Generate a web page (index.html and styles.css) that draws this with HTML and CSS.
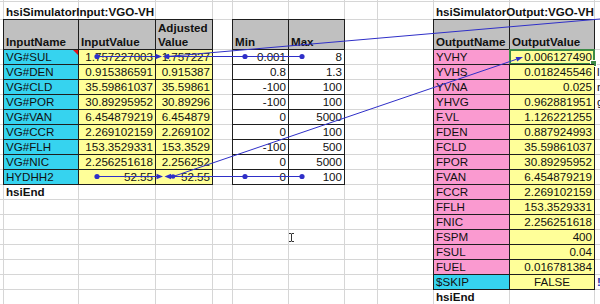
FILE: index.html
```html
<!DOCTYPE html>
<html>
<head>
<meta charset="utf-8">
<link rel="stylesheet" href="styles.css">
</head>
<body>
<div class="sheet">
  <div class="title t-in">hsiSimulatorInput:VGO-VH</div>
  <div class="title t-out">hsiSimulatorOutput:VGO-VH</div>

  <div class="tbl tbl-in">
    <div class="c hd">InputName</div><div class="c hd">InputValue</div><div class="c hd"><span>Adjusted<br>Value</span></div>
    <div class="c nm cm">VG#SUL</div><div class="c yl">1.757227003</div><div class="c yl">1.757227</div>
    <div class="c nm">VG#DEN</div><div class="c yl">0.915386591</div><div class="c yl">0.915387</div>
    <div class="c nm">VG#CLD</div><div class="c yl">35.59861037</div><div class="c yl">35.59861</div>
    <div class="c nm">VG#POR</div><div class="c yl">30.89295952</div><div class="c yl">30.89296</div>
    <div class="c nm">VG#VAN</div><div class="c yl">6.454879219</div><div class="c yl">6.454879</div>
    <div class="c nm">VG#CCR</div><div class="c yl">2.269102159</div><div class="c yl">2.269102</div>
    <div class="c nm">VG#FLH</div><div class="c yl">153.3529331</div><div class="c yl">153.3529</div>
    <div class="c nm">VG#NIC</div><div class="c yl">2.256251618</div><div class="c yl">2.256252</div>
    <div class="c nm">HYDHH2</div><div class="c yl">52.55</div><div class="c yl">52.55</div>
  </div>
  <div class="end e-in">hsiEnd</div>

  <div class="tbl tbl-mm">
    <div class="c hd">Min</div><div class="c hd">Max</div>
    <div class="c num">0.001</div><div class="c num">8</div>
    <div class="c num">0.8</div><div class="c num">1.3</div>
    <div class="c num">-100</div><div class="c num">100</div>
    <div class="c num">-100</div><div class="c num">100</div>
    <div class="c num">0</div><div class="c num">5000</div>
    <div class="c num">0</div><div class="c num">100</div>
    <div class="c num">-100</div><div class="c num">500</div>
    <div class="c num">0</div><div class="c num">5000</div>
    <div class="c num">0</div><div class="c num">100</div>
  </div>

  <div class="tbl tbl-out">
    <div class="c hd">OutputName</div><div class="c hd">OutputValue</div>
    <div class="c pk">YVHY</div><div class="c yl sel">0.006127490</div>
    <div class="c pk">YVHS</div><div class="c yl">0.018245546</div>
    <div class="c pk">YVNA</div><div class="c yl">0.025</div>
    <div class="c pk">YHVG</div><div class="c yl">0.962881951</div>
    <div class="c pk">F.VL</div><div class="c yl">1.126221255</div>
    <div class="c pk">FDEN</div><div class="c yl">0.887924993</div>
    <div class="c pk">FCLD</div><div class="c yl">35.59861037</div>
    <div class="c pk">FPOR</div><div class="c yl">30.89295952</div>
    <div class="c pk">FVAN</div><div class="c yl">6.454879219</div>
    <div class="c pk">FCCR</div><div class="c yl">2.269102159</div>
    <div class="c pk">FFLH</div><div class="c yl">153.3529331</div>
    <div class="c pk">FNIC</div><div class="c yl">2.256251618</div>
    <div class="c pk">FSPM</div><div class="c yl">400</div>
    <div class="c pk">FSUL</div><div class="c yl">0.04</div>
    <div class="c pk">FUEL</div><div class="c yl">0.016781384</div>
    <div class="c nm">$SKIP</div><div class="c yl ctr">FALSE</div>
  </div>
  <div class="end e-out">hsiEnd</div>

  <div class="k k5">l</div>
  <div class="k k6">r</div>
  <div class="k k7">g</div>
  <div class="k k19">!</div>

  <svg class="arrows" width="600" height="304" viewBox="0 0 600 304">
    <g stroke="#2f2fc8" stroke-width="1" fill="#2f2fc8">
      <line x1="97" y1="56.5" x2="157" y2="56.5"/>
      <line x1="302" y1="56.5" x2="168" y2="56.5"/>
      <line x1="167" y1="56.5" x2="600" y2="19"/>
      <line x1="97" y1="176.5" x2="158" y2="176.5"/>
      <line x1="302" y1="176.5" x2="170" y2="176.5"/>
      <line x1="173" y1="176.5" x2="516.4" y2="59.3"/>
    </g>
    <g fill="#2f2fc8" stroke="none">
      <circle cx="97" cy="56.5" r="2.6"/>
      <circle cx="245" cy="56.5" r="2.6"/>
      <circle cx="302" cy="56.5" r="2.6"/>
      <path d="M162 56.5 L155.5 53.8 L155.5 59.2 Z"/>
      <path d="M162.5 56.5 L169 53.8 L169 59.2 Z"/>
      <circle cx="167.5" cy="56.5" r="2.3"/>
      <circle cx="97" cy="176.5" r="2.6"/>
      <circle cx="245" cy="176.5" r="2.6"/>
      <circle cx="302" cy="176.5" r="2.6"/>
      <path d="M163 176.5 L156.5 173.8 L156.5 179.2 Z"/>
      <path d="M164.5 176.5 L171 173.8 L171 179.2 Z"/>
      <circle cx="173" cy="176.5" r="2.3"/>
      <path d="M523 57 L517.2 61.6 L515.6 56.9 Z"/>
    </g>
  </svg>

  <svg class="cursor" width="7" height="11" viewBox="0 0 7 11">
    <path d="M1 1.5h2M4 1.5h2M3.5 1.5v8M1 9.5h2M4 9.5h2" stroke="#333" stroke-width="1" fill="none"/>
  </svg>
</div>
</body>
</html>
```

FILE: styles.css
```css
* {
  box-sizing: border-box;
  margin: 0;
  padding: 0;
}

body {
  margin: 0;
  background: #fff;
  font-family: "Liberation Sans", Arial, sans-serif;
  font-size: 11.6px;
  line-height: 14px;
  color: #111;
}

.sheet {
  position: relative;
  width: 600px;
  height: 304px;
  overflow: hidden;
  display: grid;
  grid-template-columns: 3px 75px 77px 57px 20px 56px 56px 33px 56px 76px 85px 60px;
  grid-template-rows: 1px 18px 30px repeat(17, 15px);
  background-color: #fff;
  background-image:
    linear-gradient(#d6d6d6, #d6d6d6),
    linear-gradient(#d6d6d6, #d6d6d6),
    linear-gradient(#d6d6d6, #d6d6d6),
    linear-gradient(#d6d6d6, #d6d6d6),
    linear-gradient(#d6d6d6, #d6d6d6),
    linear-gradient(#d6d6d6, #d6d6d6),
    linear-gradient(#d6d6d6, #d6d6d6),
    linear-gradient(#d6d6d6, #d6d6d6),
    linear-gradient(#d6d6d6, #d6d6d6),
    linear-gradient(#d6d6d6, #d6d6d6),
    linear-gradient(#d6d6d6, #d6d6d6),
    linear-gradient(#d6d6d6, #d6d6d6),
    linear-gradient(#d6d6d6, #d6d6d6),
    repeating-linear-gradient(to bottom, #d6d6d6 0, #d6d6d6 1px, transparent 1px, transparent 15px);
  background-size:
    1px 100%, 1px 100%, 1px 100%, 1px 100%, 1px 100%, 1px 100%,
    1px 100%, 1px 100%, 1px 100%, 1px 100%, 1px 100%,
    100% 1px, 100% 1px, 100% 255px;
  background-position:
    3px 0, 78px 0, 155px 0, 212px 0, 232px 0, 288px 0,
    344px 0, 377px 0, 433px 0, 509px 0, 594px 0,
    0 1px, 0 19px, 0 49px;
  background-repeat: no-repeat;
}

.title,
.end {
  font-weight: bold;
  white-space: nowrap;
  padding-left: 3px;
  align-self: end;
}

.t-in { grid-column: 2; grid-row: 2; }
.t-out { grid-column: 10; grid-row: 2; }
.e-in { grid-column: 2; grid-row: 13; }
.e-out { grid-column: 10; grid-row: 20; }

.tbl {
  display: grid;
  border-right: 1px solid #1e1e1e;
  border-bottom: 1px solid #1e1e1e;
  margin: 0 -1px -1px 0;
}

.tbl-in {
  grid-column: 2 / 5;
  grid-row: 3 / 13;
  grid-template-columns: 75px 77px 57px;
  grid-template-rows: 30px repeat(9, 15px);
}

.tbl-mm {
  grid-column: 6 / 8;
  grid-row: 3 / 13;
  grid-template-columns: 56px 56px;
  grid-template-rows: 30px repeat(9, 15px);
}

.tbl-out {
  grid-column: 10 / 12;
  grid-row: 3 / 20;
  grid-template-columns: 76px 85px;
  grid-template-rows: 30px repeat(16, 15px);
}

.c {
  position: relative;
  display: flex;
  align-items: flex-end;
  padding: 0 2px;
  white-space: nowrap;
  border-left: 1px solid #1e1e1e;
  border-top: 1px solid #1e1e1e;
}

.hd {
  background: #c0c0c0;
  font-weight: bold;
}

.nm { background: #36d3ef; }
.pk { background: #fa9ad0; }

.yl {
  background: #ffff99;
  justify-content: flex-end;
}

.num {
  background: #fff;
  justify-content: flex-end;
}

.yl.ctr { justify-content: center; }

.cm::after {
  content: "";
  position: absolute;
  top: 0;
  right: 0;
  border-style: solid;
  border-width: 0 5px 5px 0;
  border-color: transparent #e0161b transparent transparent;
}

.sel::before {
  content: "";
  position: absolute;
  left: -1px;
  top: -1px;
  right: -1px;
  bottom: -1px;
  border: 2px solid #3b8a46;
}

.sel::after {
  content: "";
  position: absolute;
  right: -3px;
  bottom: -3px;
  width: 5px;
  height: 5px;
  background: #3b8a46;
  border: 1px solid #fff;
}

.k {
  grid-column: 12;
  padding-left: 3px;
  align-self: end;
}

.k5 { grid-row: 5; }
.k6 { grid-row: 6; }
.k7 { grid-row: 7; }
.k19 { grid-row: 19; color: #2a2a9a; font-weight: bold; }

.arrows {
  position: absolute;
  left: 0;
  top: 0;
  pointer-events: none;
}

.cursor {
  position: absolute;
  left: 288px;
  top: 232px;
}
```
